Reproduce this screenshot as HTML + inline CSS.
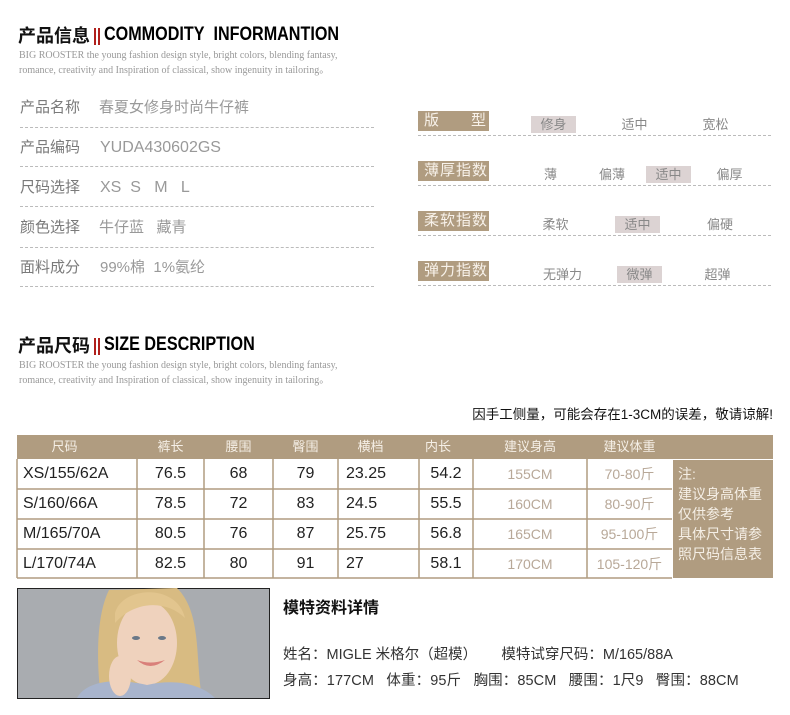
<!DOCTYPE html>
<html><head><meta charset="utf-8">
<style>
*{margin:0;padding:0;box-sizing:border-box}
body{width:790px;height:715px;background:#fff;position:relative;overflow:hidden;font-family:"Liberation Sans","Noto Sans CJK SC",sans-serif}
.a{position:absolute;white-space:nowrap}
.h{font-weight:bold;font-size:18px;color:#111;line-height:20px}
.en{font-family:"Liberation Sans",sans-serif;font-weight:bold;font-size:19px;line-height:20px;transform:scaleX(0.85);transform-origin:left}
.bar{position:absolute;width:2px;height:17px;background:#b0201c}
.sub{font-family:"Liberation Serif",serif;font-size:10px;color:#999;line-height:15px}
.lab{font-size:15px;color:#7a7a7a;line-height:20px}
.val{font-size:15px;color:#999;line-height:20px}
.dl{position:absolute;height:0;border-top:1px dashed #bbb}
.tag{position:absolute;background:#b09c80;color:#f8f2ea;font-size:15px;width:71px;height:20px;line-height:20px;padding-left:6px;letter-spacing:1px}
.op{position:absolute;font-size:13px;color:#888;height:17px;line-height:17px;text-align:center}
.hl{background:#dcd3d3}
.c{position:absolute;text-align:center;font-size:16px;color:#222;line-height:20px}
.t{position:absolute;text-align:center;font-size:13px;color:#f5efe6;line-height:18px}
.g{color:#b8a898}
</style></head><body>

<div class="a h" style="left:18px;top:26px">产品信息</div>
<div class="bar" style="left:94px;top:28px"></div><div class="bar" style="left:98px;top:28px"></div>
<div class="a en" style="left:104px;top:25px">COMMODITY&nbsp; INFORMANTION</div>
<div class="a sub" style="left:19px;top:48px">BIG ROOSTER the young fashion design style, bright colors, blending fantasy,<br>romance, creativity and Inspiration of classical, show ingenuity in tailoring。</div>

<div class="a lab" style="left:20px;top:98px">产品名称</div><div class="a val" style="left:99px;top:98px">春夏女修身时尚牛仔裤</div>
<div class="dl" style="left:20px;width:354px;top:127px"></div>
<div class="a lab" style="left:20px;top:138px">产品编码</div><div class="a val" style="left:100px;top:138px;font-size:16px">YUDA430602GS</div>
<div class="dl" style="left:20px;width:354px;top:166px"></div>
<div class="a lab" style="left:20px;top:178px">尺码选择</div><div class="a val" style="left:100px;top:178px;font-size:16px">XS&nbsp; S&nbsp; &nbsp;M&nbsp; &nbsp;L</div>
<div class="dl" style="left:20px;width:354px;top:206px"></div>
<div class="a lab" style="left:20px;top:218px">颜色选择</div><div class="a val" style="left:99px;top:218px">牛仔蓝&nbsp;&nbsp; 藏青</div>
<div class="dl" style="left:20px;width:354px;top:247px"></div>
<div class="a lab" style="left:20px;top:258px">面料成分</div><div class="a val" style="left:100px;top:258px">99%棉&nbsp; 1%氨纶</div>
<div class="dl" style="left:20px;width:354px;top:286px"></div>

<div class="tag" style="left:418px;top:111px">版&nbsp;&nbsp;&nbsp;&nbsp;&nbsp;&nbsp;型</div>
<div class="op hl" style="left:531px;top:116px;width:45px">修身</div>
<div class="op" style="left:612px;top:116px;width:45px">适中</div>
<div class="op" style="left:693px;top:116px;width:45px">宽松</div>
<div class="dl" style="left:418px;width:353px;top:135px"></div>

<div class="tag" style="left:418px;top:161px">薄厚指数</div>
<div class="op" style="left:538px;top:166px;width:25px">薄</div>
<div class="op" style="left:592px;top:166px;width:40px">偏薄</div>
<div class="op hl" style="left:646px;top:166px;width:45px">适中</div>
<div class="op" style="left:707px;top:166px;width:45px">偏厚</div>
<div class="dl" style="left:418px;width:353px;top:185px"></div>

<div class="tag" style="left:418px;top:211px">柔软指数</div>
<div class="op" style="left:538px;top:216px;width:35px">柔软</div>
<div class="op hl" style="left:615px;top:216px;width:45px">适中</div>
<div class="op" style="left:700px;top:216px;width:40px">偏硬</div>
<div class="dl" style="left:418px;width:353px;top:235px"></div>

<div class="tag" style="left:418px;top:261px">弹力指数</div>
<div class="op" style="left:540px;top:266px;width:45px">无弹力</div>
<div class="op hl" style="left:617px;top:266px;width:45px">微弹</div>
<div class="op" style="left:700px;top:266px;width:35px">超弹</div>
<div class="dl" style="left:418px;width:353px;top:285px"></div>

<div class="a h" style="left:18px;top:336px">产品尺码</div>
<div class="bar" style="left:94px;top:338px"></div><div class="bar" style="left:98px;top:338px"></div>
<div class="a en" style="left:104px;top:335px">SIZE DESCRIPTION</div>
<div class="a sub" style="left:19px;top:358px">BIG ROOSTER the young fashion design style, bright colors, blending fantasy,<br>romance, creativity and Inspiration of classical, show ingenuity in tailoring。</div>

<div class="a" style="right:17px;top:405px;font-size:13.5px;color:#111;line-height:20px">因手工侧量，可能会存在1-3CM的误差，敬请谅解!</div>

<svg class="a" style="left:0;top:0" width="790" height="600">
<rect x="17" y="435" width="756" height="24" fill="#b09c80"/>
<rect x="17" y="459" width="655" height="119" fill="#fff"/>
<rect x="673" y="460" width="100" height="118" fill="#b09c80"/>
<g stroke="#b09c80" stroke-width="1.5" fill="none">
<line x1="17" y1="459" x2="17" y2="578"/>
<line x1="17" y1="578" x2="672" y2="578"/>
<line x1="17" y1="489" x2="672" y2="489"/>
<line x1="17" y1="519" x2="672" y2="519"/>
<line x1="17" y1="549" x2="672" y2="549"/>
<line x1="137" y1="459" x2="137" y2="578"/>
<line x1="204" y1="459" x2="204" y2="578"/>
<line x1="273" y1="459" x2="273" y2="578"/>
<line x1="338" y1="459" x2="338" y2="578"/>
<line x1="419" y1="459" x2="419" y2="578"/>
<line x1="473" y1="459" x2="473" y2="578"/>
<line x1="587" y1="459" x2="587" y2="578"/>
</g>
</svg>

<div class="t" style="left:17px;top:438px;width:95px">尺码</div>
<div class="t" style="left:137px;top:438px;width:67px">裤长</div>
<div class="t" style="left:204px;top:438px;width:69px">腰围</div>
<div class="t" style="left:273px;top:438px;width:65px">臀围</div>
<div class="t" style="left:338px;top:438px;width:65px">横档</div>
<div class="t" style="left:403px;top:438px;width:70px">内长</div>
<div class="t" style="left:473px;top:438px;width:114px">建议身高</div>
<div class="t" style="left:587px;top:438px;width:85px">建议体重</div>

<div class="c" style="left:23px;top:464px;text-align:left">XS/155/62A</div>
<div class="c" style="left:23px;top:494px;text-align:left">S/160/66A</div>
<div class="c" style="left:23px;top:524px;text-align:left">M/165/70A</div>
<div class="c" style="left:23px;top:554px;text-align:left">L/170/74A</div>

<div class="c" style="left:137px;top:464px;width:67px">76.5</div>
<div class="c" style="left:137px;top:494px;width:67px">78.5</div>
<div class="c" style="left:137px;top:524px;width:67px">80.5</div>
<div class="c" style="left:137px;top:554px;width:67px">82.5</div>
<div class="c" style="left:204px;top:464px;width:69px">68</div>
<div class="c" style="left:204px;top:494px;width:69px">72</div>
<div class="c" style="left:204px;top:524px;width:69px">76</div>
<div class="c" style="left:204px;top:554px;width:69px">80</div>
<div class="c" style="left:273px;top:464px;width:65px">79</div>
<div class="c" style="left:273px;top:494px;width:65px">83</div>
<div class="c" style="left:273px;top:524px;width:65px">87</div>
<div class="c" style="left:273px;top:554px;width:65px">91</div>
<div class="c" style="left:346px;top:464px;text-align:left">23.25</div>
<div class="c" style="left:346px;top:494px;text-align:left">24.5</div>
<div class="c" style="left:346px;top:524px;text-align:left">25.75</div>
<div class="c" style="left:346px;top:554px;text-align:left">27</div>
<div class="c" style="left:419px;top:464px;width:54px">54.2</div>
<div class="c" style="left:419px;top:494px;width:54px">55.5</div>
<div class="c" style="left:419px;top:524px;width:54px">56.8</div>
<div class="c" style="left:419px;top:554px;width:54px">58.1</div>
<div class="c g" style="left:473px;top:464px;width:114px;font-size:14px">155CM</div>
<div class="c g" style="left:473px;top:494px;width:114px;font-size:14px">160CM</div>
<div class="c g" style="left:473px;top:524px;width:114px;font-size:14px">165CM</div>
<div class="c g" style="left:473px;top:554px;width:114px;font-size:14px">170CM</div>
<div class="c g" style="left:587px;top:464px;width:85px;font-size:14px">70-80斤</div>
<div class="c g" style="left:587px;top:494px;width:85px;font-size:14px">80-90斤</div>
<div class="c g" style="left:587px;top:524px;width:85px;font-size:14px">95-100斤</div>
<div class="c g" style="left:587px;top:554px;width:85px;font-size:14px">105-120斤</div>

<div class="a" style="left:678px;top:464px;font-size:14px;line-height:20px;color:#f5efe6">注:<br>建议身高体重<br>仅供参考<br>具体尺寸请参<br>照尺码信息表</div>

<svg class="a" style="left:17px;top:588px" width="253" height="111">
<rect x="0.5" y="0.5" width="252" height="110" fill="#a9acb0" stroke="#222"/>
<path d="M92 2 C78 30 80 80 84 110 L185 110 C178 70 185 25 160 0 Z" fill="#d8bb82"/>
<ellipse cx="130" cy="55" rx="30" ry="42" fill="#efd2bd"/>
<path d="M98 25 C105 -2 160 -5 168 30 C150 12 118 12 98 35Z" fill="#e2c58e"/>
<path d="M60 110 C70 92 100 90 130 97 C160 90 185 97 198 110Z" fill="#a8b4cc"/>
<ellipse cx="103" cy="88" rx="11" ry="20" fill="#efd2bd"/>
<ellipse cx="119" cy="50" rx="4" ry="2" fill="#6a7888"/>
<ellipse cx="145" cy="50" rx="4" ry="2" fill="#6a7888"/>
<path d="M120 72 Q133 84 148 72 Q133 77 120 72Z" fill="#d9807a"/>
</svg>

<div class="a" style="left:283px;top:598px;font-size:16px;font-weight:bold;color:#111;line-height:22px">模特资料详情</div>
<div class="a" style="left:283px;top:645px;font-size:14.5px;color:#333;line-height:20px">姓名：MIGLE 米格尔（超模）&nbsp;&nbsp;&nbsp;&nbsp;&nbsp; 模特试穿尺码：M/165/88A</div>
<div class="a" style="left:283px;top:671px;font-size:14.5px;color:#333;line-height:20px;letter-spacing:0.1px">身高：177CM&nbsp;&nbsp; 体重：95斤&nbsp;&nbsp; 胸围：85CM&nbsp;&nbsp; 腰围：1尺9&nbsp;&nbsp; 臀围：88CM</div>

</body></html>
